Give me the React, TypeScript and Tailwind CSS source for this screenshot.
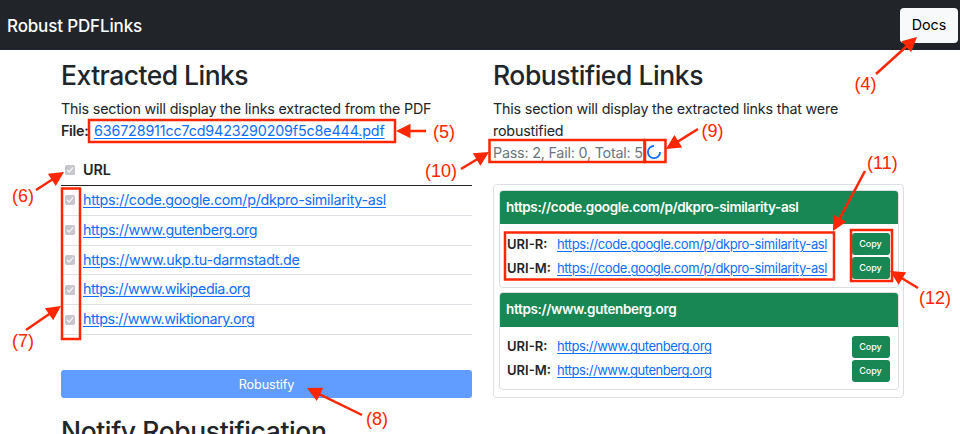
import React from "react";

const links = [
  { url: "https://code.google.com/p/dkpro-similarity-asl", tracking: "tracking-[-0.29px]" },
  { url: "https://www.gutenberg.org", tracking: "tracking-[-0.33px]" },
  { url: "https://www.ukp.tu-darmstadt.de", tracking: "tracking-[-0.26px]" },
  { url: "https://www.wikipedia.org", tracking: "tracking-[-0.39px]" },
  { url: "https://www.wiktionary.org", tracking: "tracking-[-0.42px]" },
];

const linkClass = "text-[#0d6efd] underline decoration-1 underline-offset-2";
const headingClass = "text-[26.5px] leading-[32px] font-[550]";

function Check() {
  return (
    <svg className="block h-[10px] w-[10px] shrink-0" viewBox="0 0 10 10">
      <rect width="10" height="10" rx="1.8" fill="#c6c7cd" />
      <path d="M2.4 5.2 4.2 7.1 7.7 2.8" fill="none" stroke="#f6f6f8" strokeWidth="1.3" strokeLinecap="round" strokeLinejoin="round" />
    </svg>
  );
}

function UriRow({ label, url, tracking }: { label: string; url: string; tracking: string }) {
  return (
    <div className="flex h-6 items-center">
      <span className="w-[50px] pt-px text-[13px] font-semibold">{label}</span>
      <a className={`${linkClass} ${tracking} flex-1 pt-px text-[13px]`}>{url}</a>
      <button className="h-[22px] w-[38px] rounded-[3px] bg-[#198754] text-[9px] font-medium text-white">Copy</button>
    </div>
  );
}

function Card({ url, header, body, tracking }: { url: string; header: string; body: string; tracking: string }) {
  return (
    <div className="h-[98px] overflow-hidden rounded-[4px] border border-[#dcdde0]">
      <div className={`-mx-px -mt-px flex items-center bg-[#198754] pl-[7.5px] text-[13.5px] font-semibold text-white ${header}`}>
        {url}
      </div>
      <div className={`pr-2 pl-[7.5px] ${body}`}>
        <UriRow label="URI-R:" url={url} tracking={tracking} />
        <UriRow label="URI-M:" url={url} tracking={tracking} />
      </div>
    </div>
  );
}

const boxes = [
  [89, 120, 306, 22],
  [62, 188.5, 18, 150.5],
  [489.5, 140, 155, 22],
  [645, 140, 20.5, 22],
  [505, 232.5, 329, 47],
  [851, 230, 41, 51],
];

const arrows = [
  { from: [876, 74], to: [917, 37] },
  { from: [426, 131], to: [396, 131] },
  { from: [36, 190], to: [64, 172] },
  { from: [26, 330], to: [61, 306] },
  { from: [362, 415], to: [307, 388] },
  { from: [698, 129], to: [666, 149] },
  { from: [461, 169], to: [489, 152] },
  { from: [865, 171], to: [833, 231] },
  { from: [918, 288], to: [890, 271] },
];

const labels = [
  ["(4)", 854.5, 90],
  ["(5)", 433, 138],
  ["(6)", 12, 202],
  ["(7)", 12, 347],
  ["(8)", 366, 425],
  ["(9)", 701.5, 137],
  ["(10)", 425, 177],
  ["(11)", 867, 169],
  ["(12)", 919, 304],
] as const;

function Annotations() {
  return (
    <svg className="pointer-events-none absolute inset-0" width="960" height="434" viewBox="0 0 960 434">
      {boxes.map(([x, y, w, h]) => (
        <rect key={`${x}-${y}`} x={x} y={y} width={w} height={h} fill="none" stroke="#ff2600" strokeWidth="2.5" />
      ))}
      {arrows.map(({ from, to }) => {
        const dx = to[0] - from[0];
        const dy = to[1] - from[1];
        const length = Math.hypot(dx, dy);
        const angle = (Math.atan2(dy, dx) * 180) / Math.PI;
        return (
          <g key={`${from[0]}`} transform={`translate(${from[0]} ${from[1]}) rotate(${angle})`} fill="#ff2600">
            <rect x="0" y="-1.25" width={length - 12} height="2.5" />
            <polygon points={`${length},0 ${length - 14.5},-7.3 ${length - 14.5},7.3`} />
          </g>
        );
      })}
      {labels.map(([text, x, y]) => (
        <text key={text} x={x} y={y} fill="#ff2600" className="font-['Liberation_Sans',Arial,sans-serif] text-[18px]">
          {text}
        </text>
      ))}
    </svg>
  );
}

export default function App() {
  return (
    <div className="relative h-[434px] w-[960px] overflow-hidden bg-white font-['Inter',sans-serif] text-[14.3px] whitespace-nowrap text-[#212529]">
      <nav className="flex h-[50px] items-center justify-between bg-[#212529] pr-[2px] pl-[7px]">
        <span className="pt-[3px] text-[17px] font-[450] tracking-[-0.15px] text-white">Robust PDFLinks</span>
        <button className="h-[35px] w-[58px] rounded-[4px] bg-[#f8f9fa] text-[14.3px] text-black">Docs</button>
      </nav>
      <main className="flex gap-[21px] pl-[61px]">
        <section className="w-[411px]">
          <h2 className={`pt-[9px] tracking-[-0.54px] ${headingClass}`}>Extracted Links</h2>
          <p className="mt-[7px] leading-[22px] tracking-[-0.185px]">This section will display the links extracted from the PDF</p>
          <p className="flex leading-[22px]">
            <b className="w-[33px] font-semibold tracking-[-0.3px]">File:</b>
            <a className={`${linkClass} tracking-[-0.14px]`}>636728911cc7cd9423290209f5c8e444.pdf</a>
          </p>
          <div className="mt-[13px] flex h-[31px] items-center gap-2 border-b border-[#212529] pl-1 font-semibold">
            <Check />
            URL
          </div>
          {links.map(({ url, tracking }) => (
            <div key={url} className="flex h-[29.8px] items-center gap-2 border-b border-[#dee2e6] pl-1">
              <Check />
              <a className={`${linkClass} ${tracking} pb-[1.5px]`}>{url}</a>
            </div>
          ))}
          <button className="mt-[35px] block h-7 w-full rounded-[3px] bg-[#619dfe] pt-px text-[12.7px] tracking-[-0.1px] text-white">Robustify</button>
          <h2 className={`mt-[17px] tracking-[-0.4px] ${headingClass}`}>Notify Robustification</h2>
        </section>
        <section className="w-[411px]">
          <h2 className={`pt-[9px] tracking-[-0.45px] ${headingClass}`}>Robustified Links</h2>
          <p className="mt-[7px] leading-[22px] tracking-[-0.185px]">
            This section will display the extracted links that were
            <br />
            robustified
          </p>
          <div className="flex h-[21px] items-center text-[#6c757d]">
            <span className="w-[153.5px] tracking-[-0.2px]">Pass: 2, Fail: 0, Total: 5</span>
            <svg className="-mt-0.5 h-[14px] w-[14px]" viewBox="0 0 14 14">
              <path d="M7 .9 A6.1 6.1 0 1 0 13.1 7" fill="none" stroke="#0d6efd" strokeWidth="1.8" />
            </svg>
          </div>
          <div className="mt-[21px] flex h-[214px] flex-col gap-1 rounded-[4px] border border-[#dcdfe3] px-[4.5px] pt-[5px]">
            <Card url={links[0].url} header="h-[34px] tracking-[-0.36px]" body="pt-2" tracking="tracking-[-0.38px]" />
            <Card url={links[1].url} header="h-[35px] tracking-[-0.33px]" body="pt-[7.5px]" tracking="tracking-[-0.46px]" />
          </div>
        </section>
      </main>
      <Annotations />
    </div>
  );
}
